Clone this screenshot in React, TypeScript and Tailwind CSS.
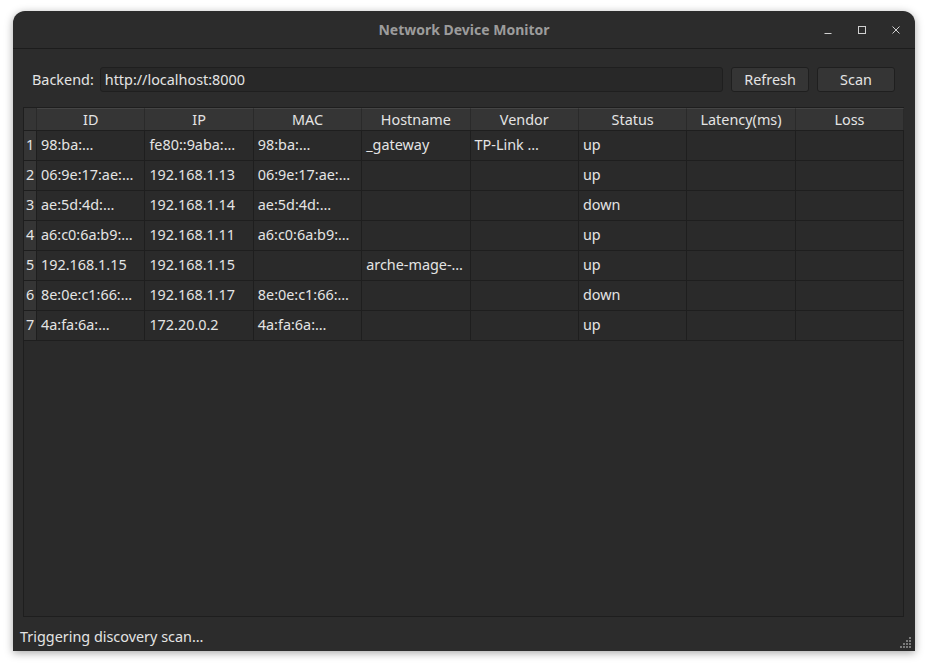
import React from "react";

const columns = ["ID", "IP", "MAC", "Hostname", "Vendor", "Status", "Latency(ms)", "Loss"];

const rows: string[][] = [
  ["98:ba:…", "fe80::9aba:…", "98:ba:…", "_gateway", "TP-Link …", "up", "", ""],
  ["06:9e:17:ae:…", "192.168.1.13", "06:9e:17:ae:…", "", "", "up", "", ""],
  ["ae:5d:4d:…", "192.168.1.14", "ae:5d:4d:…", "", "", "down", "", ""],
  ["a6:c0:6a:b9:…", "192.168.1.11", "a6:c0:6a:b9:…", "", "", "up", "", ""],
  ["192.168.1.15", "192.168.1.15", "", "arche-mage-…", "", "up", "", ""],
  ["8e:0e:c1:66:…", "192.168.1.17", "8e:0e:c1:66:…", "", "", "down", "", ""],
  ["4a:fa:6a:…", "172.20.0.2", "4a:fa:6a:…", "", "", "up", "", ""],
];

function WindowControls() {
  return (
    <div className="absolute right-[11px] top-0 flex h-full items-center gap-[18px] text-[#d0d0d0]">
      <svg width="16" height="16" viewBox="0 0 16 16">
        <path d="M4.5 11.5h7" stroke="currentColor" strokeWidth="1" />
      </svg>
      <svg width="16" height="16" viewBox="0 0 16 16">
        <rect x="4.5" y="4.5" width="7" height="7" fill="none" stroke="currentColor" strokeWidth="1" />
      </svg>
      <svg width="16" height="16" viewBox="0 0 16 16">
        <path d="M4.5 4.5l7 7M11.5 4.5l-7 7" stroke="currentColor" strokeWidth="1" />
      </svg>
    </div>
  );
}

function ResizeGrip() {
  const dots: [number, number][] = [];
  for (let r = 0; r < 4; r++) {
    for (let c = 3 - r; c < 4; c++) dots.push([c * 3, r * 3]);
  }
  return (
    <svg width="12" height="12" viewBox="0 0 12 12" className="absolute bottom-[2px] right-[3px]">
      {dots.map(([x, y], i) => (
        <rect key={i} x={x} y={y} width="2" height="2" fill="#7a7a7a" />
      ))}
    </svg>
  );
}

export default function App() {
  return (
    <div
      className="h-[666px] w-[928px] overflow-hidden bg-white pl-[13px] pt-[11px] text-[14.4px] text-[#e4e4e4]"
      style={{ fontFamily: '"Noto Sans", "Open Sans", sans-serif' }}
    >
      <div className="flex h-[640px] w-[902px] flex-col rounded-t-[12px] bg-[#2c2c2c] shadow-[0_2px_8px_rgba(0,0,0,0.35)]">
        {/* title bar */}
        <div className="relative flex h-[38px] shrink-0 items-center justify-center border-b border-[#1c1c1c]">
          <span className="text-[14px] font-bold text-[#9c9c9c]">Network Device Monitor</span>
          <WindowControls />
        </div>

        {/* backend row */}
        <div className="mt-[18px] flex h-[25px] items-center pl-[19px] pr-[20px]">
          <span className="mr-[6px]">Backend:</span>
          <div className="flex h-full flex-1 items-center rounded-[3px] border border-[#1f1f1f] bg-[#282828] px-[4px]">
            http://localhost:8000
          </div>
          <button className="ml-[8px] h-full w-[78px] rounded-[3px] border border-[#1f1f1f] bg-[#353535] text-[#e4e4e4]">
            Refresh
          </button>
          <button className="ml-[8px] h-full w-[78px] rounded-[3px] border border-[#1f1f1f] bg-[#353535] text-[#e4e4e4]">
            Scan
          </button>
        </div>

        {/* table */}
        <div className="ml-[10px] mr-[11px] mt-[15px] flex flex-1 flex-col border border-[#1e1e1e] bg-[#2a2a2a]">
          <div className="flex h-[23px] border-b border-[#1e1e1e] bg-[#353535]">
            <div className="w-[13px] shrink-0 border-r border-[#2a2a2a]" />
            {columns.map((c) => (
              <div
                key={c}
                className="flex w-[108.4px] shrink-0 items-center justify-center border-r border-t border-[#2a2a2a] border-t-[#454545]"
              >
                {c}
              </div>
            ))}
          </div>
          {rows.map((r, i) => (
            <div key={i} className="flex h-[30px]">
              <div className="flex w-[13px] shrink-0 items-center justify-center border-b border-r border-[#1e1e1e] bg-[#353535] pb-[1px]">
                {i + 1}
              </div>
              {r.map((cell, j) => (
                <div
                  key={j}
                  className="flex w-[108.4px] shrink-0 items-center overflow-hidden whitespace-nowrap border-b border-r border-[#1e1e1e] pb-[2px] pl-[4px]"
                >
                  {cell}
                </div>
              ))}
            </div>
          ))}
        </div>

        {/* status bar */}
        <div className="relative flex h-[34px] shrink-0 items-center pl-[7px] pt-[6px]">
          Triggering discovery scan…
          <ResizeGrip />
        </div>
      </div>
    </div>
  );
}
